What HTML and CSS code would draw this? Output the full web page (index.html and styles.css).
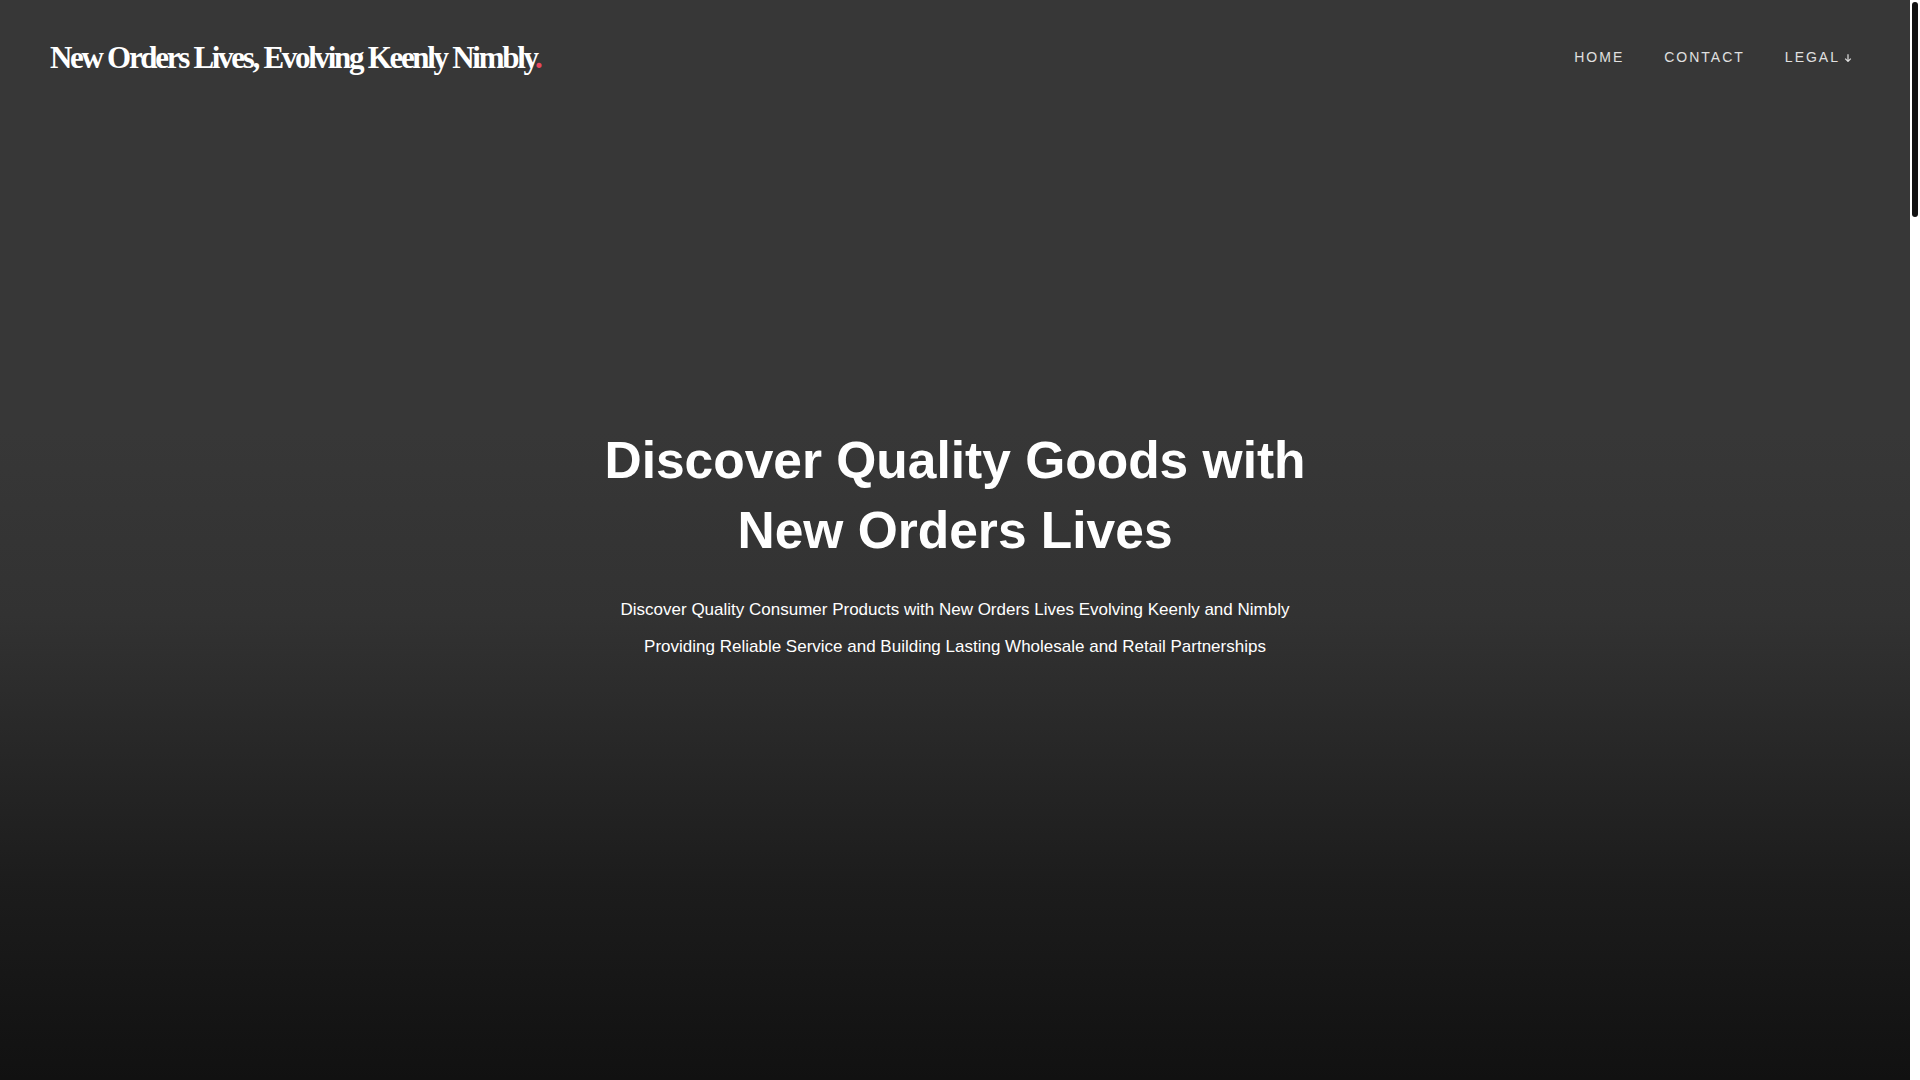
FILE: index.html
```html
<!DOCTYPE html>
<html lang="en">
<head>
<meta charset="utf-8">
<title>New Orders Lives, Evolving Keenly Nimbly</title>
<link rel="stylesheet" href="styles.css">
</head>
<body>
<div class="page">
<section class="hero">
  <header class="site-header">
    <a class="brand" href="#">New Orders Lives, Evolving Keenly Nimbly<span class="brand-dot">.</span></a>
    <nav class="main-nav">
      <a class="nav-link" href="#">Home</a>
      <a class="nav-link" href="#">Contact</a>
      <a class="nav-link nav-drop" href="#">Legal<svg class="drop-arrow" width="8" height="8" viewBox="0 0 8 8" aria-hidden="true"><path d="M4 0.3V7.2M1.2 4.6L4 7.4L6.8 4.6" fill="none" stroke="#e0e0e0" stroke-width="1.2"/></svg></a>
    </nav>
  </header>
  <div class="hero-content">
    <h1 class="hero-title">Discover Quality Goods with<br>New Orders Lives</h1>
    <p class="hero-text">Discover Quality Consumer Products with New Orders Lives Evolving Keenly and Nimbly<br>Providing Reliable Service and Building Lasting Wholesale and Retail Partnerships</p>
  </div>
</section>
<main class="below">
  <section class="below-section"></section>
  <section class="below-section"></section>
  <section class="below-section"></section>
</main>
</div>
<div class="scrollbar" aria-hidden="true"><div class="scroll-thumb"></div></div>
</body>
</html>
```

FILE: styles.css
```css
html, body {
  margin: 0;
  height: 100%;
  background: #111;
  overflow: hidden;
}
body {
  display: flex;
  font-family: "Liberation Sans", Arial, sans-serif;
  color: #fff;
}
.page {
  flex: 1;
  min-width: 0;
  height: 100vh;
  overflow-y: auto;
}
.scrollbar {
  flex: 0 0 10px;
  height: 100vh;
  background: #fff;
  display: flex;
  flex-direction: column;
  align-items: center;
  padding-top: 2px;
  box-sizing: border-box;
}
.scroll-thumb {
  width: 6px;
  height: 215px;
  background: #111;
  border-radius: 3px;
}
a {
  color: inherit;
  text-decoration: none;
}
.hero {
  height: 100vh;
  display: grid;
  grid-template-columns: 1fr;
  grid-template-rows: 1fr;
  background: linear-gradient(to bottom,
    #373737 0%,
    #373737 40%,
    #323232 57%,
    #2b2b2b 65%,
    #1c1c1c 82%,
    #111111 100%);
}
.site-header {
  grid-area: 1 / 1;
  align-self: start;
  display: flex;
  justify-content: space-between;
  align-items: flex-start;
  padding: 41px 58px 0 50px;
  position: relative;
  z-index: 2;
}
.brand {
  font-family: "Liberation Serif", "Times New Roman", serif;
  font-weight: 700;
  font-size: 31px;
  line-height: 34px;
  letter-spacing: -2.3px;
  color: #fff;
}
.brand-dot {
  color: #e84a5f;
}
.main-nav {
  display: flex;
  gap: 40px;
  margin-top: 8px;
}
.nav-link {
  font-size: 14px;
  line-height: 16px;
  letter-spacing: 2px;
  text-transform: uppercase;
  color: #e0e0e0;
  display: flex;
  align-items: flex-end;
}
.drop-arrow {
  display: block;
  margin-left: 4px;
  margin-bottom: 3px;
}
.hero-content {
  grid-area: 1 / 1;
  align-self: center;
  text-align: center;
  padding-top: 10px;
}
.hero-title {
  margin: 0 0 26px;
  font-size: 51.5px;
  line-height: 70px;
  font-weight: 700;
  letter-spacing: 0;
  color: #fff;
}
.hero-text {
  margin: 0;
  font-size: 17px;
  line-height: 37px;
  color: #fff;
}
.below {
  background: #111;
}
.below-section {
  height: 1424px;
}
```
